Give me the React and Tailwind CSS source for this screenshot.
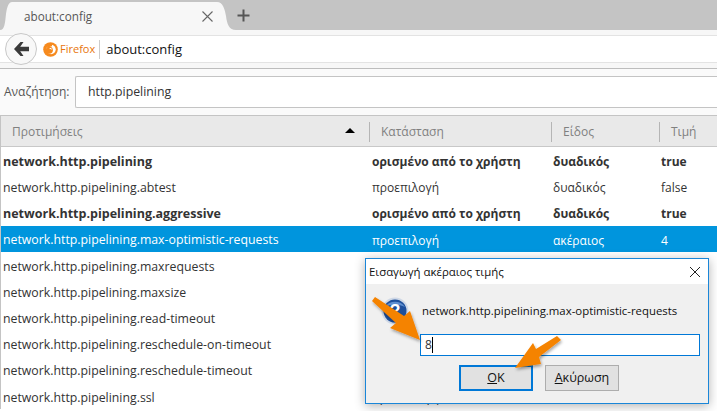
import React from 'react';

const rows = [
  { name: 'network.http.pipelining', status: 'ορισμένο από το χρήστη', type: 'δυαδικός', value: 'true', bold: true },
  { name: 'network.http.pipelining.abtest', status: 'προεπιλογή', type: 'δυαδικός', value: 'false' },
  { name: 'network.http.pipelining.aggressive', status: 'ορισμένο από το χρήστη', type: 'δυαδικός', value: 'true', bold: true },
  { name: 'network.http.pipelining.max-optimistic-requests', status: 'προεπιλογή', type: 'ακέραιος', value: '4', selected: true },
  // the dialog covers the other columns of these rows
  { name: 'network.http.pipelining.maxrequests' },
  { name: 'network.http.pipelining.maxsize' },
  { name: 'network.http.pipelining.read-timeout' },
  { name: 'network.http.pipelining.reschedule-on-timeout' },
  { name: 'network.http.pipelining.reschedule-timeout' },
  { name: 'network.http.pipelining.ssl', status: 'προεπιλογή' },
];

function FirefoxIcon() {
  return (
    <svg width="15" height="15" viewBox="0 0 16 16" className="shrink-0">
      <circle cx="8" cy="8" r="7.8" fill="#f68a1e" />
      <circle cx="8.6" cy="8" r="5" fill="#fff" />
      <circle cx="6.8" cy="8.8" r="3.7" fill="#f68a1e" />
      <path d="M4 1.5L10 1L9.5 4.5L4.5 6Z" fill="#f68a1e" />
      <path d="M7 6.6C8.4 6.2 9.6 7 9.5 8.2C8.8 7.6 7.8 7.4 7 7.6Z" fill="#fff" />
    </svg>
  );
}

function Header({ label, width, arrow }) {
  return (
    <div className={`flex items-center relative h-full pl-[11px] pt-[1px] text-[12px] text-[#808080] ${width}`}>
      <span>{label}</span>
      {arrow && <span className="absolute right-[15px] top-[12px] w-0 h-0 border-x-[5px] border-x-transparent border-b-[5px] border-b-black" />}
      <span className="absolute right-0 top-[6px] h-[20px] w-px bg-[#b5b5b5]" />
    </div>
  );
}

function Row({ row }) {
  const color = row.selected ? 'bg-[#0095dd] text-white' : 'text-[#333]';
  return (
    <div className={`flex items-center h-[26.2px] pt-[4px] text-[12px] whitespace-nowrap ${color} ${row.bold ? 'font-bold' : ''}`}>
      <div className={`w-[371px] pl-[2px] ${row.bold ? 'text-[12.5px]' : 'text-[12.3px]'}`}>{row.name}</div>
      <div className="w-[181px]">{row.status}</div>
      <div className="w-[108px]">{row.type}</div>
      <div>{row.value}</div>
    </div>
  );
}

function Dialog() {
  return (
    <div className="absolute left-[365px] top-[258px] w-[344px] h-[146px] bg-[#f0f0f0] border border-[#1a86d8] shadow-[0_2px_10px_rgba(0,0,0,0.3)] text-[11.4px] text-[#111]">
      <div className="flex items-center justify-between h-[25px] bg-white pl-[3px] pr-[7px]">
        <span>Εισαγωγή ακέραιος τιμής</span>
        <svg width="12" height="12" viewBox="0 0 12 12"><path d="M1 1L11 11M11 1L1 11" stroke="#222" strokeWidth="1" /></svg>
      </div>
      <div className="flex items-center h-[50px] pl-[15px] pt-[3px]">
        <svg width="28" height="28" viewBox="0 0 28 28" className="shrink-0">
          <circle cx="14" cy="14" r="13.5" fill="#cfd8e6" />
          <circle cx="14" cy="14" r="11.5" fill="#1d4f9c" />
          <path d="M4 10C8 3 20 3 24 10C18 7 10 7 4 10Z" fill="#5f8fd0" />
          <text x="14" y="20" textAnchor="middle" fontSize="18" fontWeight="700" fill="#fff" fontFamily="Liberation Sans, sans-serif">?</text>
        </svg>
        <span className="ml-[13px]">network.http.pipelining.max-optimistic-requests</span>
      </div>
      <div className="ml-[54px] w-[280px] h-[22px] bg-white border border-[#0078d7] flex items-center pl-[4px] text-[12px] text-[#333]">
        <span>8</span>
        <span className="w-px h-[16px] bg-black" />
      </div>
      <div className="flex ml-[93px] mt-[9px] gap-[12px] text-[12.5px]">
        <div className="flex items-center justify-center w-[74px] h-[26px] bg-[#e1e1e1] border-2 border-[#0078d7]"><span className="underline">O</span>K</div>
        <div className="flex items-center justify-center w-[74px] h-[26px] bg-[#e1e1e1] border border-[#adadad]"><span className="underline">Α</span>κύρωση</div>
      </div>
    </div>
  );
}

function Arrows() {
  return (
    <svg width="717" height="411" viewBox="0 0 717 411" className="absolute inset-0 pointer-events-none">
      <defs>
        <filter id="arrowShadow" x="-30%" y="-30%" width="160%" height="160%">
          <feDropShadow dx="1" dy="2" stdDeviation="1.5" floodColor="#000" floodOpacity="0.35" />
        </filter>
      </defs>
      <g fill="#f58300" filter="url(#arrowShadow)">
        <polygon points="420,340 410,311 404,316 375,297 372,301 396,323 390,328" />
        <polygon points="515,368 533,343 536,349 557,336 561,340 539,357 541,364" />
      </g>
    </svg>
  );
}

export default function App() {
  return (
    <div className="relative w-[717px] h-[411px] overflow-hidden bg-white font-['Open_Sans',sans-serif]">
      {/* tab strip */}
      <div className="flex items-end h-[30px] bg-[#c4c4c4]">
        <svg width="12" height="28" viewBox="0 0 12 28" className="block shrink-0"><path d="M0 28C5 28 5 20 6 12C7 4 9 0 12 0V28Z" fill="#f7f7f7" /></svg>
        <div className="flex items-center justify-between w-[202px] h-[28px] bg-[#f7f7f7] pl-[12px] pr-[1px] pt-[1px] text-[11.7px] text-[#555] whitespace-nowrap">
          <span>about:config</span>
          <svg width="11" height="11" viewBox="0 0 11 11"><path d="M0.5 0.5L10.5 10.5M10.5 0.5L0.5 10.5" stroke="#666" strokeWidth="1.1" /></svg>
        </div>
        <svg width="22" height="28" viewBox="0 0 22 28" className="block shrink-0"><path d="M0 0H3C9 0 11 8 12 14C13 22 15 28 22 28H0Z" fill="#f7f7f7" /></svg>
        <svg width="13" height="13" viewBox="0 0 13 13" className="ml-[1px] mb-[8px]"><path d="M6.5 0.5V12.5M0.5 6.5H12.5" stroke="#555" strokeWidth="2" /></svg>
      </div>

      {/* nav bar */}
      <div className="relative h-[39px] bg-[#f7f7f7] border-b border-[#bdbdbd] pt-[5px]">
        <div className="flex items-center h-[28px] bg-white border-y border-[#e3e3e3] pl-[43px] pt-[1px] whitespace-nowrap">
          <FirefoxIcon />
          <span className="ml-[2px] text-[11px] text-[#e8750c]">Firefox</span>
          <span className="ml-[4px] w-px h-[19px] bg-[#ccc]" />
          <span className="ml-[6px] pt-[1px] text-[13px] text-[#111]">about:config</span>
        </div>
        <div className="absolute left-[5px] top-[3px] flex items-center justify-center w-[32px] h-[32px] rounded-full bg-[#f8f8f8] border border-[#c8c8c8]">
          <svg width="15" height="14" viewBox="0 0 15 14"><path d="M6.5 0L0 7L6.5 14H9.5L6.2 9.2H15V4.8H6.2L9.5 0Z" fill="#3a3a3a" /></svg>
        </div>
      </div>

      {/* search */}
      <div className="flex items-center h-[47px] bg-[#fafafa] border-b border-[#c4c4c4] pb-[1px]">
        <label className="ml-[4px] w-[71px] pt-[1px] text-[12px] text-[#555]">Αναζήτηση:</label>
        <div className="flex-1 h-[32px] flex items-center bg-white border border-[#c4c4c4] rounded-l-[2px] border-r-0 pl-[12px] pt-[1px] text-[12.3px] text-[#333]">http.pipelining</div>
      </div>

      {/* table */}
      <div className="border-l border-[#c4c4c4]">
        <div className="flex h-[31px] bg-[#e9e9e9] border-b border-[#c8c8c8]">
          <Header label="Προτιμήσεις" width="w-[369px]" arrow />
          <Header label="Κατάσταση" width="w-[182px]" />
          <Header label="Είδος" width="w-[108px]" />
          <div className="flex items-center pl-[11px] pt-[1px] text-[12px] text-[#808080]">Τιμή</div>
        </div>
        {rows.map((row) => <Row key={row.name} row={row} />)}
      </div>

      <Dialog />
      <Arrows />
    </div>
  );
}
